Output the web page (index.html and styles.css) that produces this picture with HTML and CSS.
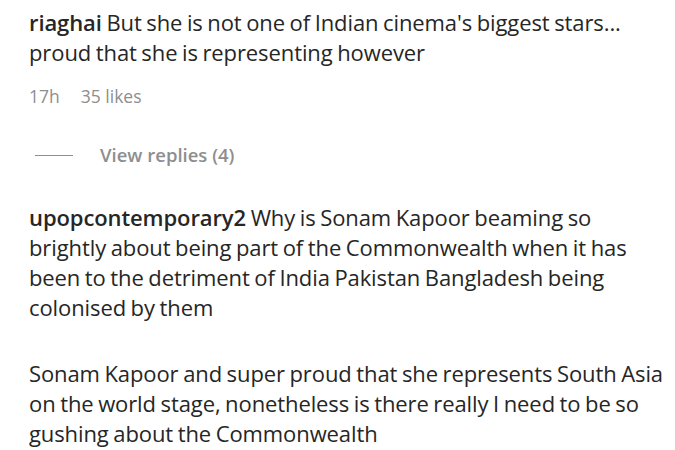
FILE: index.html
```html
<!DOCTYPE html>
<html lang="en">
<head>
    <meta charset="UTF-8">
    <title>Comments</title>
    <link rel="stylesheet" href="styles.css">
</head>
<body>
    <div class="comments">
        <div class="comment">
            <p class="text"><span class="user">riaghai</span> But she is not one of Indian cinema's biggest stars... proud that she is representing however</p>
            <div class="meta">
                <span>17h</span>
                <span>35 likes</span>
            </div>
            <div class="replies">
                <span class="dash"></span>
                <span class="view">View replies (4)</span>
            </div>
        </div>

        <div class="comment second">
            <p class="text"><span class="user">upopcontemporary2</span> Why is Sonam Kapoor beaming so brightly about being part of the Commonwealth when it has been to the detriment of India Pakistan Bangladesh being colonised by them</p>
            <p class="text para">Sonam Kapoor and super proud that she represents South Asia on the world stage, nonetheless is there really I need to be so gushing about the Commonwealth</p>
        </div>
    </div>
</body>
</html>
```
FILE: styles.css
```css
body, html {
    margin: 0;
    background-color: #fff;
}

.comments {
    padding: 7px 0 0 29px;
    font-family: "Open Sans", "Noto Sans", sans-serif;
    color: #262626;
}

.text {
    margin: 0;
    font-size: 22px;
    line-height: 30px;
    letter-spacing: -0.1px;
    word-spacing: -1px;
    max-width: 620px;
}

.user {
    font-weight: 600;
}

.meta {
    display: flex;
    gap: 21px;
    margin-top: 17px;
    font-size: 17.5px;
    line-height: 24px;
    color: #8e8e8e;
}

.replies {
    display: flex;
    align-items: center;
    gap: 27px;
    margin-top: 35px;
    padding-left: 6px;
    font-size: 18.5px;
    line-height: 24px;
    color: #8e8e8e;
}

.dash {
    width: 38px;
    height: 1px;
    background-color: #8e8e8e;
}

.view {
    font-weight: 600;
}

.second {
    margin-top: 35px;
}

.para {
    margin-top: 36px;
    max-width: 644px;
}
```
